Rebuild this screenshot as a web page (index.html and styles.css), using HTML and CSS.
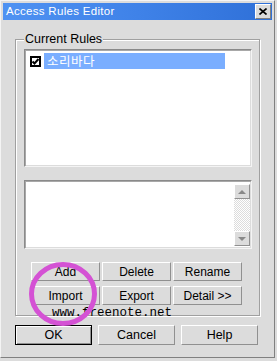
FILE: index.html
```html
<!DOCTYPE html>
<html>
<head>
<meta charset="utf-8">
<link rel="stylesheet" href="styles.css">
</head>
<body>
<div class="window">
  <div class="titlebar">
    <span class="title">Access Rules Editor</span>
    <button class="close" aria-label="Close">
      <svg width="8" height="7" viewBox="0 0 8 7"><path d="M0.5 0.5 L7.5 6.5 M7.5 0.5 L0.5 6.5" stroke="#000" stroke-width="1.6" fill="none"/></svg>
    </button>
  </div>
  <div class="group">
    <span class="group-label">Current Rules</span>
    <div class="list rules">
      <div class="rule-row">
        <svg class="check" width="11" height="11" viewBox="0 0 11 11"><rect x="1" y="1" width="9" height="9" fill="#fff" stroke="#000" stroke-width="2"/><path d="M2.5 5.5 L4.5 7.5 L8.5 3" stroke="#000" stroke-width="2" fill="none"/></svg>
        <span class="rule-name">소리바다</span>
      </div>
    </div>
    <div class="list detail">
      <div class="detail-body"></div>
      <div class="scrollbar">
        <div class="sb-btn"><svg width="8" height="4" viewBox="0 0 8 4"><path d="M0 4 L4 0 L8 4 Z" fill="#888"/></svg></div>
        <div class="sb-track"></div>
        <div class="sb-btn"><svg width="8" height="4" viewBox="0 0 8 4"><path d="M0 0 L8 0 L4 4 Z" fill="#888"/></svg></div>
      </div>
    </div>
    <div class="btn-grid">
      <button class="btn">Add</button>
      <button class="btn">Delete</button>
      <button class="btn">Rename</button>
      <button class="btn">Import</button>
      <button class="btn">Export</button>
      <button class="btn">Detail &gt;&gt;</button>
    </div>
  </div>
  <div class="dialog-buttons">
    <button class="btn big default">OK</button>
    <button class="btn big">Cancel</button>
    <button class="btn big">Help</button>
  </div>
  <div class="watermark">www.freenote.net</div>
  <svg class="mark" width="68" height="64" viewBox="0 0 68 64"><ellipse cx="34" cy="32" rx="31.5" ry="29.5" fill="none" stroke="#d452d4" stroke-width="5"/></svg>
</div>
</body>
</html>
```
FILE: styles.css
```css
html, body {
  margin: 0;
  padding: 0;
  background: #dcdcdc;
}
body {
  font-family: "Liberation Sans", Arial, "Noto Sans CJK KR", sans-serif;
  font-size: 12px;
  color: #000;
}
.window {
  position: relative;
  width: 275px;
  height: 358px;
  box-sizing: border-box;
  background: #dcdcdc;
  border-top: 1px solid #f4f4f4;
  border-left: 1px solid #f4f4f4;
  border-right: 1px solid #808080;
  border-bottom: 1px solid #808080;
  padding: 2px;
  display: flex;
  flex-direction: column;
}
.titlebar {
  height: 17px;
  display: flex;
  align-items: center;
  justify-content: space-between;
  background: linear-gradient(90deg, #4f92f2 0%, #3f82e8 50%, #2f70d8 100%);
  padding: 0 1px 0 3px;
}
.title {
  color: #fff;
  font-size: 11.5px;
  letter-spacing: 0.3px;
  line-height: 17px;
}
.close {
  width: 16px;
  height: 15px;
  margin: 0;
  padding: 0;
  box-sizing: border-box;
  background: #dcdcdc;
  border-top: 1px solid #fff;
  border-left: 1px solid #fff;
  border-right: 1px solid #808080;
  border-bottom: 1px solid #808080;
  display: flex;
  align-items: center;
  justify-content: center;
}
.group {
  margin: 19px 12px 0 12px;
  border: 1px solid #a0a0a0;
  box-shadow: inset 1px 1px 0 #fff, 1px 1px 0 #fff;
  display: flex;
  flex-direction: column;
  padding: 0 0 10px 0;
}
.group-label {
  align-self: flex-start;
  margin: -8px 0 0 8px;
  padding: 0 1px;
  background: #dcdcdc;
  line-height: 14px;
  font-size: 12.5px;
}
.list {
  margin-left: 8px;
  width: 228px;
  box-sizing: border-box;
  background: #fff;
  border-top: 1px solid #8a8a8a;
  border-left: 1px solid #8a8a8a;
  border-right: 1px solid #f4f4f4;
  border-bottom: 1px solid #f4f4f4;
  box-shadow: inset 1px 1px 0 #a8a8a8, inset -1px -1px 0 #dcdcdc;
}
.rules {
  margin-top: 3px;
  height: 118px;
  padding: 3px 0 0 5px;
}
.rule-row {
  display: flex;
  align-items: center;
  gap: 3px;
  height: 16px;
}
.check {
  display: block;
}
.rule-name {
  width: 181px;
  height: 16px;
  background: #7aaeff;
  color: #fff;
  font-family: "Noto Sans CJK KR", sans-serif;
  font-size: 12.5px;
  letter-spacing: 0.5px;
  line-height: 16px;
  padding-left: 3px;
  box-sizing: border-box;
}
.detail {
  margin-top: 13px;
  height: 69px;
  display: flex;
  padding: 2px 1px 2px 2px;
}
.detail-body {
  flex: 1;
}
.scrollbar {
  width: 16px;
  display: flex;
  flex-direction: column;
  margin-top: 1px;
}
.sb-btn {
  height: 15px;
  box-sizing: border-box;
  background: #dcdcdc;
  border-top: 1px solid #fff;
  border-left: 1px solid #fff;
  border-right: 1px solid #909090;
  border-bottom: 1px solid #909090;
  display: flex;
  align-items: center;
  justify-content: center;
}
.sb-track {
  flex: 1;
  background: repeating-conic-gradient(#dcdcdc 0 25%, #fff 0 50%) 0 0 / 2px 2px;
}
.btn-grid {
  margin: 13px 0 0 15px;
  display: grid;
  grid-template-columns: 69px 69px 69px;
  grid-auto-rows: 19px;
  column-gap: 2px;
  row-gap: 5px;
}
.btn {
  margin: 0;
  padding: 0;
  box-sizing: border-box;
  background: #dcdcdc;
  border-top: 1px solid #fff;
  border-left: 1px solid #fff;
  border-right: 1px solid #909090;
  border-bottom: 1px solid #909090;
  font-family: "Liberation Sans", Arial, sans-serif;
  font-size: 12px;
  color: #000;
  line-height: 16px;
}
.dialog-buttons {
  margin: 9px 0 0 12px;
  display: flex;
  gap: 6px;
}
.big {
  width: 77px;
  height: 20px;
  font-size: 12.5px;
}
.default {
  border: 1px solid #000;
  box-shadow: inset 1px 1px 0 #fff, inset -1px -1px 0 #909090;
}
.watermark {
  position: absolute;
  left: 51px;
  top: 305px;
  font-family: "Liberation Mono", monospace;
  font-size: 12.5px;
  line-height: 14px;
  color: #000;
}
.mark {
  position: absolute;
  left: 28px;
  top: 261px;
}
```
